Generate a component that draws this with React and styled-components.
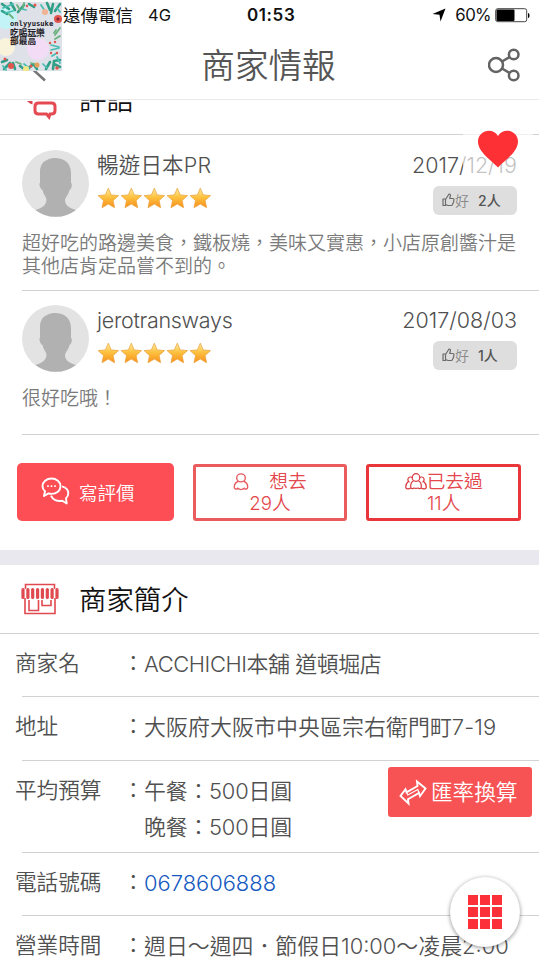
import styled, { createGlobalStyle } from "styled-components";

const GlobalStyle = createGlobalStyle`
  * {
    box-sizing: border-box;
  }

  body {
    margin: 0;
    background: #fff;
    font-family: Inter, "Noto Sans CJK TC", sans-serif;
  }
`;

const reviews = [
  {
    name: "暢遊日本PR",
    date: "2017/12/19",
    likes: 2,
    text: "超好吃的路邊美食，鐵板燒，美味又實惠，小店原創醬汁是其他店肯定品嘗不到的。",
    height: 156,
    tracking: 0.2,
  },
  {
    name: "jerotransways",
    date: "2017/08/03",
    likes: 1,
    text: "很好吃哦！",
    height: 144,
    tracking: -0.3,
  },
];

function Logo() {
  return (
    <LogoBox>
      <svg width="62" height="71" viewBox="0 0 62 71">
        <rect width="62" height="71" fill="#dfe1e8" />
        <rect width="62" height="2" fill="#f6f8f8" />
        <circle cx="6" cy="18" r="11" fill="#c3f3f7" />
        <circle cx="38" cy="49" r="11" fill="#f3dcf5" />
        <circle cx="6" cy="47" r="9" fill="#faf3dc" />
        <g fill="none" stroke="#2f9f86" strokeWidth="2.600" strokeLinecap="round">
          <path d="M2 4l7 5M11 3l4 7M18 12l6-7M2 11l5 3M29 4l5 3M47 3l3 7M53 4l-2 9M60 4l-5 7" />
          <path d="M2 62l5-2M4 69l6-6M15 69l-2-6M20 66l4 3M28 69l4-4M37 69l-3-4M46 69l4-7M53 69l1-8M60 67l-6-3M60 60l-6 1" />
        </g>
        <g fill="none" stroke="#6bb27e" strokeWidth="1.800" strokeLinecap="round">
          <path d="M60 28l-5 7M60 36l-5 3M56 30l-2 3M9 14l4 4M17 5l3 5M24 3l-1 5M16 62l5 2M31 63l4 1" />
        </g>
        <g fill="none" stroke="#45bdb2" strokeWidth="1.700" strokeLinecap="round">
          <path d="M3 8l10-4M5 13l8-2M22 9l4 1M41 5l4 6M57 8l3 4M3 66l3 4M24 64l5 4M43 64l4 4M57 57l3 6M51 45l8 2M51 50l8-2M52 56l5-3" />
        </g>
        <g fill="#e2564f">
          <circle cx="58" cy="19" r="4" />
          <circle cx="11" cy="66" r="3" />
          <circle cx="5" cy="59" r="1.500" />
          <circle cx="35" cy="5" r="1.500" />
          <circle cx="27" cy="6" r="1.200" />
          <circle cx="50" cy="43" r="1.200" />
          <circle cx="55" cy="42" r="1.200" />
          <circle cx="57" cy="53" r="1.200" />
          <circle cx="51" cy="53" r="1.200" />
          <circle cx="57" cy="68" r="1.800" />
          <circle cx="31" cy="66" r="1.500" />
        </g>
        <circle cx="58" cy="19" r="1.600" fill="#7d2331" />
        <circle cx="45" cy="12" r="3" fill="#f1b193" />
        <circle cx="37" cy="65" r="2.500" fill="#e8a15c" />
        <circle cx="26" cy="69" r="3" fill="#f4e789" />
        <circle cx="14" cy="41" r="3.500" fill="#e9b465" opacity=".6" />
      </svg>
      <LogoText>
        <em>onlyyusuke</em>
        <br />
        吃喝玩樂
        <br />
        部最高
      </LogoText>
    </LogoBox>
  );
}

function Star() {
  return (
    <svg width="23" height="22" viewBox="0 0 23 22">
      <path
        d="M11.3 1.2l2.9 6.7 7.3.7-5.4 4.9 1.5 7.2-6.3-3.7-6.3 3.7 1.5-7.2L1.1 8.6l7.3-.7z"
        fill="url(#gold)"
        stroke="#eda540"
        strokeWidth=".8"
        strokeLinejoin="round"
      />
    </svg>
  );
}

function Avatar() {
  return (
    <svg width="67" height="67" viewBox="0 0 67 67">
      <circle cx="33.5" cy="33.5" r="33.5" fill="#e3e3e3" />
      <path
        d="M33 8c9 0 16 5 16 15v10c1.500 0 1 6-1.500 7-1 5-4 7-4.500 10 0 6 5 8 11 10a33.500 33.500 0 0 1-40.500 0c6-2 10.500-4 11-10 0-3-3-5-4-10-2.500-1-4-7-2.500-7V22c0-8 4-11 8-12.500 2-1 4-1.500 7-1.500z"
        fill="#b1b1b1"
      />
    </svg>
  );
}

function StoreIcon() {
  return (
    <svg width="38" height="32" viewBox="0 0 38 32" fill="none" stroke="#e04a4f" strokeWidth="1.600">
      <path d="M4.500 6V1.500h29V6M4 15v15.500h30V15" />
      <path d="M8 17v10.500h9.500V17M21 17v5.500h9V17" />
      <path d="M2 6.500v8M6.900 6.500v8M11.700 6.500v8M16.600 6.500v8M21.400 6.500v8M26.300 6.500v8M31.100 6.500v8M36 6.500v8" strokeWidth="3.200" strokeLinecap="round" />
    </svg>
  );
}

function ReviewIcon() {
  return (
    <svg width="31" height="20" viewBox="0 0 31 20" fill="none" stroke="#e54a52" strokeWidth="3">
      <path d="M0 1h5.500v3.500L3 3.500z" fill="#d9434c" stroke="none" />
      <path d="M11.500 3h13q3.500 0 3.500 3.500v4q0 3.500-3.500 3.500H23l-1 3-2.500-3h-8Q8 14 8 10.500v-4Q8 3 11.500 3z" />
    </svg>
  );
}

function ChatIcon() {
  return (
    <svg width="29" height="29" viewBox="0 0 29 29" fill="none" stroke="#fff" strokeWidth="1.900" strokeLinejoin="round">
      <path d="M10.500 1.500c5 0 9 3.400 9 7.700s-4 7.700-9 7.700c-1 0-2-.1-3-.5l-4.500 2.600 1-4.800C2.300 12.800 1.500 11 1.500 9.200c0-4.300 4-7.700 9-7.700z" />
      <path d="M21 9.300c3.800 1 6.300 3.800 6.300 7 0 2-.9 3.700-2.300 5l.7 5.200-4.400-2.800c-5 1-9.800-1-11.300-5" />
      <path d="M6.200 9.200h1.600M9.700 9.200h1.600M13.200 9.200h1.600" strokeWidth="1.700" />
    </svg>
  );
}

function PersonIcon() {
  return (
    <svg width="16" height="18" viewBox="0 0 16 18" fill="none" stroke="#e75a5e" strokeWidth="1.400">
      <ellipse cx="8" cy="4.900" rx="4.300" ry="4" />
      <path d="M5.500 8.200C2.800 9.300 1.300 11.500 1.300 14c.1 2.200 2.300 2.700 3.400 1.300 1.900 1.500 4.700 1.500 6.600 0 1.100 1.400 3.300.9 3.400-1.300 0-2.500-1.500-4.700-4.200-5.800" />
    </svg>
  );
}

function PeopleIcon() {
  return (
    <svg width="22" height="18" viewBox="0 0 22 18" fill="none" stroke="#d9383e" strokeWidth="1.200">
      <circle cx="11" cy="4.500" r="3.800" />
      <path d="M7.300 4.600a2.700 2.700 0 1 0-2.700 4.600M14.700 4.600a2.700 2.700 0 1 1 2.700 4.600" />
      <path d="M8.500 7.700C6 9.200 5.500 11.700 5.700 14.200c.3 1.800 2.300 1.700 3 .8 1.500.6 3 .6 4.600 0 .7.900 2.700 1 3-.8.200-2.500-.3-5-2.800-6.500" />
      <path d="M3 8.700C1.300 10.200.6 12.500.8 14.700c.2 1.500 3.200 1.600 4.900.3M19 8.700c1.700 1.500 2.400 3.800 2.200 6-.2 1.500-3.200 1.600-4.900.3" />
    </svg>
  );
}

function ThumbIcon() {
  return (
    <svg width="13" height="14" viewBox="0 0 13 14" fill="none" stroke="#6a6a6a" strokeWidth="1.200" strokeLinejoin="round">
      <path d="M1 6h2.500v6.500H1zM3.500 6.500L7 1c1.500 0 1.800 1.200 1.200 2.500L7.700 5.500H11c1.500.5 1 1.800.7 2 .3.800.2 1.400-.4 1.900.1.700-.1 1.200-.7 1.600 0 1-.5 1.500-1.300 1.500H6l-2.500-1" />
    </svg>
  );
}

function SwapIcon() {
  return (
    <svg width="28" height="27" viewBox="0 0 28 27" fill="none" stroke="#fff" strokeWidth="1.900">
      <path d="M7.500 13.300l-1-3L1.500 17l8 7.500-.5-4.200 11-6.300 1 3.200 5.500-7.700-8.500-7 .5 4.500z" />
      <path d="M7.500 13.300l1.300 2.700 10-5.500 1.200 3.500" strokeWidth="1.200" />
    </svg>
  );
}

function Review({ name, date, likes, text, height, tracking }) {
  return (
    <ReviewItem $height={height}>
      <ReviewTop>
        <Avatar />
        <Person>
          <Name $tracking={tracking}>{name}</Name>
          <Stars>
            {[1, 2, 3, 4, 5].map((n) => (
              <Star key={n} />
            ))}
          </Stars>
        </Person>
        <Meta>
          <DateText>{date}</DateText>
          <LikeButton>
            <ThumbIcon />
            <span>好</span>
            <b>{likes}人</b>
          </LikeButton>
        </Meta>
      </ReviewTop>
      <ReviewText>{text}</ReviewText>
    </ReviewItem>
  );
}

export default function App() {
  return (
    <Screen>
      <GlobalStyle />
      <Defs width="0" height="0">
        <linearGradient id="gold" x1="0" y1="0" x2="0" y2="1">
          <stop offset="0" stopColor="#fff0a8" />
          <stop offset=".45" stopColor="#fdc340" />
          <stop offset="1" stopColor="#f88f1c" />
        </linearGradient>
      </Defs>

      <StatusBar>
        <Carrier>遠傳電信</Carrier>
        <Network>4G</Network>
        <Clock>01:53</Clock>
        <Battery>
          <svg width="14" height="14" viewBox="0 0 14 14">
            <path d="M13.500.5L8.500 13.500 7.500 6.800.5 6z" />
          </svg>
          <span>60%</span>
          <svg width="36" height="15" viewBox="0 0 36 15">
            <rect x=".7" y=".7" width="31" height="13" rx="2" fill="#fff" stroke="#444" />
            <rect x="1.500" y="1.500" width="18" height="11.500" rx="1" />
            <path d="M33 5c2 0 2 5 0 5z" />
          </svg>
        </Battery>
      </StatusBar>

      <NavBar>
        <svg width="30" height="34" viewBox="0 0 30 34" fill="none" stroke="#777" strokeWidth="2.500">
          <path d="M24 2L7 17l17 15.500" />
        </svg>
        <h1>商家情報</h1>
        <svg width="34" height="34" viewBox="0 0 34 34" fill="none" stroke="#636363" strokeWidth="2.500">
          <circle cx="8" cy="17" r="7" />
          <circle cx="25.700" cy="6.500" r="4.800" />
          <circle cx="25.700" cy="27.500" r="4.800" />
          <path d="M14 13.500l7.500-4.500M14 20.500l7.500 4.500" />
        </svg>
      </NavBar>

      <Content>
        <ClippedTitle>
          <ReviewIcon />
          <h2>評語</h2>
        </ClippedTitle>

        {reviews.map((review) => (
          <Review key={review.name} {...review} />
        ))}

        <Actions>
          <WriteButton>
            <ChatIcon />
            寫評價
          </WriteButton>
          <CountButton $color="#e95b5d">
            <Line $gap={20}>
              <PersonIcon />
              想去
            </Line>
            <Line>29人</Line>
          </CountButton>
          <CountButton $color="#e9363b">
            <Line>
              <PeopleIcon />
              已去過
            </Line>
            <Line>11人</Line>
          </CountButton>
        </Actions>

        <Divider />

        <SectionTitle>
          <StoreIcon />
          <h2>商家簡介</h2>
        </SectionTitle>

        <Row $height={63}>
          <Label>商家名</Label>
          <Colon />
          <Value $tracking={-0.4}>ACCHICHI本舖 道頓堀店</Value>
        </Row>
        <Row $height={64}>
          <Label>地址</Label>
          <Colon />
          <Value $tracking={0.1}>大阪府大阪市中央區宗右衛門町7-19</Value>
        </Row>
        <Row $height={92}>
          <Label>平均預算</Label>
          <Colon />
          <Value $tracking={-0.2}>
            午餐：500日圓
            <br />
            晚餐：500日圓
          </Value>
          <RateButton>
            <SwapIcon />
            匯率換算
          </RateButton>
        </Row>
        <Row $height={63}>
          <Label>電話號碼</Label>
          <Colon />
          <Phone>0678606888</Phone>
        </Row>
        <Row $height={64}>
          <Label>營業時間</Label>
          <Colon />
          <Value>週日～週四．節假日10:00～凌晨2:00</Value>
        </Row>
      </Content>

      <Logo />
      <HeartButton>
        <svg width="42" height="38" viewBox="0 0 42 38">
          <path d="M21 37.500C14 30 1 22 1 11.500 1 1 15-3.500 21 6c6-9.500 20-5 20 5.500C41 22 28 30 21 37.500z" fill="#fd3135" />
        </svg>
      </HeartButton>
      <MenuButton>
        {[1, 2, 3, 4, 5, 6, 7, 8, 9].map((n) => (
          <i key={n} />
        ))}
      </MenuButton>
    </Screen>
  );
}

const Screen = styled.div`
  position: relative;
  display: flex;
  flex-direction: column;
  width: 539px;
  height: 960px;
  overflow: hidden;
  background: #fff;
  color: #505050;
`;

const Defs = styled.svg`
  position: absolute;
`;

const StatusBar = styled.div`
  display: grid;
  grid-template-columns: 85px 99px 1fr auto;
  align-items: center;
  flex: none;
  height: 30px;
  padding: 0 8px 0 63px;
  font-size: 17px;
  color: #111;
`;

const Carrier = styled.span`
  padding-bottom: 2px;
  font-size: 17.5px;
`;

const Network = styled.span`
  font-size: 16.5px;
`;

const Clock = styled.span`
  font-weight: 600;
  letter-spacing: 0.6px;
`;

const Battery = styled.div`
  display: flex;
  align-items: center;

  svg:first-child {
    margin-right: 9px;
  }

  span {
    margin-right: 4px;
    font-size: 16.8px;
    letter-spacing: -0.6px;
  }
`;

const NavBar = styled.div`
  display: flex;
  align-items: center;
  justify-content: space-between;
  flex: none;
  height: 70px;
  padding: 0 17px 0 21px;
  border-bottom: 1px solid #e9e9e9;

  h1 {
    margin: 2px 2px 0 0;
    font-size: 33.6px;
    font-weight: 350;
    line-height: 40px;
    color: #555;
  }
`;

const Content = styled.div`
  flex: 1;
  min-height: 0;
  overflow: hidden;
`;

const TitleBar = styled.div`
  display: flex;
  border-bottom: 1px solid #d2d2d2;

  h2 {
    margin: 0;
    font-size: 27.4px;
    font-weight: 350;
    line-height: 36px;
    color: #111;
  }
`;

const ClippedTitle = styled(TitleBar)`
  align-items: flex-end;
  height: 35px;
  padding: 0 0 14px 27px;
  overflow: hidden;

  h2 {
    margin: 0 0 2px 21px;
  }
`;

const SectionTitle = styled(TitleBar)`
  align-items: center;
  height: 69px;
  padding: 0 0 0 21px;

  h2 {
    margin: 1px 0 0 20px;
  }
`;

const ReviewItem = styled.div`
  height: ${({ $height }) => $height}px;
  margin-left: 22px;
  padding: 15px 22px 0 0;
  border-bottom: 1px solid #d2d2d2;

  & + & {
    padding-top: 14px;
  }
`;

const ReviewTop = styled.div`
  display: flex;
  height: 67px;
`;

const Person = styled.div`
  flex: 1;
  margin-left: 8px;
`;

const Name = styled.div`
  font-size: 21.5px;
  font-weight: 350;
  line-height: 30px;
  letter-spacing: ${({ $tracking }) => $tracking}px;
`;

const Stars = styled.div`
  display: flex;
  margin-top: 7px;
`;

const Meta = styled.div`
  display: flex;
  flex-direction: column;
  align-items: flex-end;
`;

const DateText = styled.div`
  font-size: 21.5px;
  font-weight: 350;
  line-height: 30px;
`;

const LikeButton = styled.div`
  display: flex;
  align-items: center;
  width: 84px;
  height: 29px;
  margin-top: 6px;
  padding: 0 0 1px 9px;
  border-radius: 6px;
  background: #dedede;
  font-size: 14px;
  font-weight: 350;
  color: #888;

  b {
    margin-left: 9px;
    font-weight: 500;
    color: #555;
  }
`;

const ReviewText = styled.p`
  width: 500px;
  margin: 15px 0 0;
  font-size: 19px;
  font-weight: 350;
  line-height: 23px;
  color: #7a7a7a;
`;

const Actions = styled.div`
  display: flex;
  align-items: center;
  height: 115px;
  padding: 0 18px 0 17px;
  gap: 19px;
`;

const WriteButton = styled.div`
  display: flex;
  align-items: center;
  gap: 9px;
  width: 157px;
  height: 58px;
  margin-top: -1px;
  padding: 0 0 1px 24px;
  border-radius: 5px;
  background: #fd4e56;
  font-size: 18.5px;
  font-weight: 350;
  color: #fff;
`;

const CountButton = styled.div`
  display: flex;
  flex-direction: column;
  justify-content: center;
  width: 155px;
  height: 57px;
  border: 3px solid ${({ $color }) => $color};
  border-radius: 3px;
  font-size: 18.7px;
  font-weight: 350;
  line-height: 22px;
  color: #e4474d;
`;

const Line = styled.div`
  display: flex;
  align-items: center;
  justify-content: center;
  gap: ${({ $gap = 0 }) => $gap}px;
`;

const Divider = styled.div`
  height: 15px;
  background: #e9e8ee;
`;

const Row = styled.div`
  display: flex;
  height: ${({ $height }) => $height}px;
  padding: 11px 7px 0 15px;
  font-size: 21.6px;
  font-weight: 350;
  line-height: 36px;
  background: linear-gradient(#d2d2d2, #d2d2d2) 22px 100% / 100% 1px no-repeat;
`;

const Label = styled.div`
  width: 107.5px;
`;

const Colon = styled.div`
  width: 21.5px;

  &::before {
    content: "：";
  }
`;

const Value = styled.div`
  flex: 1;
  padding-top: 1px;
  font-size: 21.9px;
  letter-spacing: ${({ $tracking = 0 }) => $tracking}px;
  white-space: nowrap;
`;

const Phone = styled(Value)`
  color: #1458c0;
`;

const RateButton = styled.div`
  display: flex;
  align-items: center;
  gap: 4px;
  width: 144px;
  height: 50px;
  margin-top: -5px;
  padding-left: 11px;
  border-radius: 3px;
  background: #f75355;
  color: #fff;
`;

const LogoBox = styled.div`
  position: absolute;
  top: 0;
  left: 0;
  width: 62px;
  height: 71px;
`;

const LogoText = styled.div`
  position: absolute;
  top: 19px;
  left: 10px;
  font-size: 8.7px;
  font-weight: 700;
  line-height: 8.7px;
  white-space: nowrap;
  color: #26242a;

  em {
    font: 700 7.2px/8.7px "DejaVu Sans Mono", monospace;
  }
`;

const HeartButton = styled.div`
  position: absolute;
  top: 117px;
  left: 463px;
  display: flex;
  align-items: center;
  justify-content: center;
  width: 70px;
  height: 64px;
  background: rgba(255, 255, 255, 0.65);
`;

const MenuButton = styled.div`
  position: absolute;
  top: 877px;
  left: 450px;
  display: grid;
  grid-template-columns: repeat(3, 10px);
  grid-auto-rows: 10px;
  gap: 2px;
  place-content: center;
  width: 70px;
  height: 70px;
  border-radius: 50%;
  background: #fff;
  box-shadow: 0 1px 4px rgba(0, 0, 0, 0.45);

  i {
    background: #fb3038;
  }
`;
